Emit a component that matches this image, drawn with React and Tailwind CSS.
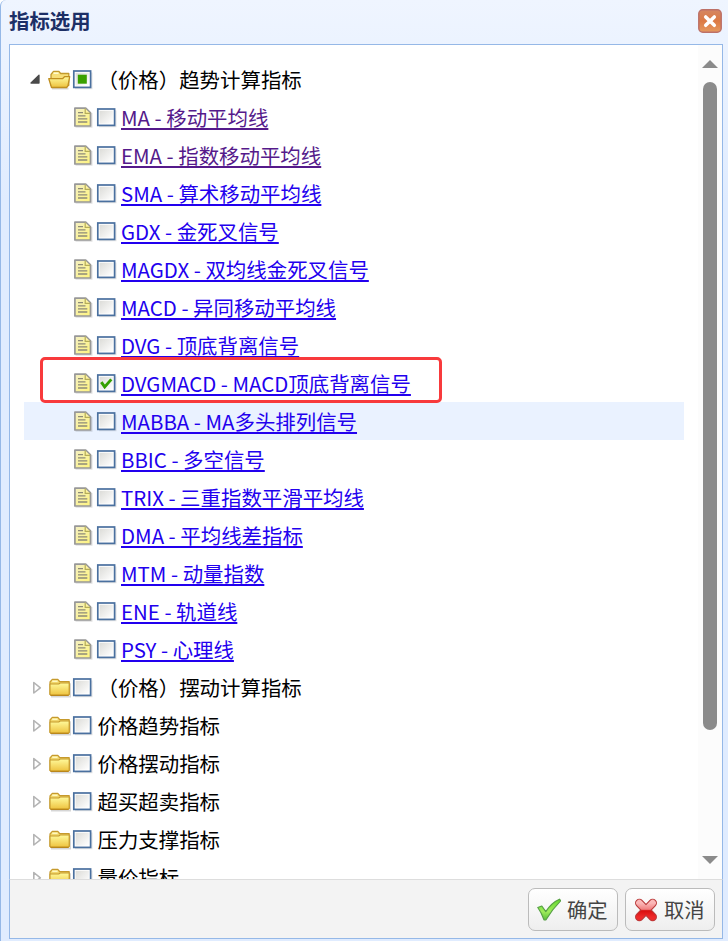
import React, { useState } from "react";
import clsx from "clsx";

const INDICATORS = [
  { name: "MA - 移动平均线", visited: true },
  { name: "EMA - 指数移动平均线", visited: true },
  { name: "SMA - 算术移动平均线" },
  { name: "GDX - 金死叉信号" },
  { name: "MAGDX - 双均线金死叉信号" },
  { name: "MACD - 异同移动平均线" },
  { name: "DVG - 顶底背离信号" },
  { name: "DVGMACD - MACD顶底背离信号", checked: true, marked: true },
  { name: "MABBA - MA多头排列信号", active: true },
  { name: "BBIC - 多空信号" },
  { name: "TRIX - 三重指数平滑平均线" },
  { name: "DMA - 平均线差指标" },
  { name: "MTM - 动量指数" },
  { name: "ENE - 轨道线" },
  { name: "PSY - 心理线" },
];

const GROUPS = [
  "（价格）摆动计算指标",
  "价格趋势指标",
  "价格摆动指标",
  "超买超卖指标",
  "压力支撑指标",
  "量价指标",
];

const Gradients = () => (
  <svg className="absolute h-0 w-0">
    <defs>
      <linearGradient id="folder" x1="0" y1="0" x2="0" y2="1">
        <stop offset="0" stopColor="#fffa9c" />
        <stop offset="1" stopColor="#edc13c" />
      </linearGradient>
      <linearGradient id="paper" x1="0" y1="0" x2="1" y2="1">
        <stop offset="0" stopColor="#f4f0c4" />
        <stop offset="1" stopColor="#fff47c" />
      </linearGradient>
      <linearGradient id="box" x1="0" y1="0" x2="1" y2="1">
        <stop offset="0" stopColor="#dcdcd8" />
        <stop offset="1" stopColor="#ffffff" />
      </linearGradient>
      <linearGradient id="tick" x1="0" y1="0" x2="0" y2="1">
        <stop offset="0" stopColor="#62d92c" />
        <stop offset="0.6" stopColor="#a0ec5c" />
        <stop offset="1" stopColor="#5cc03a" />
      </linearGradient>
      <linearGradient id="cross" x1="0" y1="0" x2="0" y2="1">
        <stop offset="0" stopColor="#fbb8b8" />
        <stop offset="0.45" stopColor="#f08080" />
        <stop offset="0.55" stopColor="#d80f0f" />
        <stop offset="1" stopColor="#ee2a2a" />
      </linearGradient>
      <linearGradient id="close" x1="0" y1="0" x2="0" y2="1">
        <stop offset="0" stopColor="#d58763" />
        <stop offset="0.5" stopColor="#dc7a45" />
        <stop offset="1" stopColor="#e59a60" />
      </linearGradient>
    </defs>
  </svg>
);

const Arrow = ({ open }) => (
  <svg className="h-[38px] w-[24px] shrink-0" viewBox="0 0 24 38">
    {open ? (
      <path d="M15 15.300v7.700H7z" fill="#4a4a4a" stroke="#4a4a4a" strokeWidth="1.3" strokeLinejoin="round" />
    ) : (
      <path d="M9.8 14.500v10.500l6.500-5.200z" fill="#fff" stroke="#b4b4b4" strokeWidth="1.6" strokeLinejoin="round" />
    )}
  </svg>
);

const Folder = ({ open }) => (
  <svg className="h-[38px] w-[23px] shrink-0" viewBox="0 -.3 23 38">
    {open ? (
      <>
        <path d="M4 28.3h16.5" stroke="#000" strokeOpacity="0.15" strokeWidth="1.6" />
        <path d="M3 25V14.2L5.500 11h5.200l2 2.200h8.100V25z" fill="#f7df79" stroke="#c39a2e" strokeWidth="1.3" strokeLinejoin="round" />
        <path d="M5.5 13h5" stroke="#fffbd0" strokeWidth="1.5" />
        <path d="M.8 18.400h13.700l2-2h5.200l-1.800 9.300-1.300 1.500H3.500z" fill="url(#folder)" stroke="#c08f20" strokeWidth="1.3" strokeLinejoin="round" />
      </>
    ) : (
      <>
        <path d="M3 28.3h19.3V15" fill="none" stroke="#000" strokeOpacity="0.16" strokeWidth="1.6" />
        <path d="M2 26V13.5L4.3 11h5.500l2 2.300h9.400V26z" fill="#f0d66a" stroke="#c69a2d" strokeWidth="1.2" strokeLinejoin="round" />
        <path d="M4.2 13h5.400" stroke="#fff8c0" strokeWidth="1.5" />
        <path d="M2 15.700h8.700l1.500-1h9V26l-1 1.200H3L2 26z" fill="url(#folder)" stroke="#c69a2d" strokeWidth="1.1" strokeLinejoin="round" />
        <path d="M2.500 26.900h18" stroke="#b68217" strokeWidth="1.200" />
      </>
    )}
  </svg>
);

const Page = () => (
  <svg className="h-[38px] w-[23px] shrink-0" viewBox="0 0 23 38">
    <path d="M3.500 29h16.300V15" fill="none" stroke="#000" strokeOpacity="0.12" strokeWidth="1.4" />
    <path d="M2.900 10.100h10.800l4.800 4.800V28H2.900z" fill="url(#paper)" stroke="#989898" strokeWidth="1.700" strokeLinejoin="round" />
    <path d="M13.200 10.500v4.900h5" fill="#fff3a0" stroke="#b5ad58" strokeWidth="1.200" />
    <path d="M6 14.700h5M6 17.800h7.500M6 20.900h9.300M6 24h9.300" stroke="#8d8a78" strokeWidth="1.300" />
  </svg>
);

const Check = ({ state, onClick }) => (
  <svg className="h-[38px] w-[24px] shrink-0" viewBox="0 -.5 24 38" onClick={onClick}>
    <path d="M4 28h16.800V12" fill="none" stroke="#000" strokeOpacity="0.1" strokeWidth="1.5" />
    <rect x="2.800" y="10.500" width="16.800" height="16.400" fill="#fff" stroke="#4a709f" strokeWidth="1.700" />
    <rect x="4.600" y="12.300" width="13.200" height="12.800" fill="url(#box)" />
    {state === "partial" && <rect x="6.800" y="14.200" width="9" height="9" fill="#3aa000" />}
    {state === "checked" && (
      <path d="M6.300 17.600l3.400 4.800 6.600-7.500" fill="none" stroke="#34a000" strokeWidth="2.900" />
    )}
  </svg>
);

const Leaf = ({ item, checked, onToggle }) => (
  <li className={clsx("relative flex h-[38px] items-center pl-[48px]", item.active && "bg-[#eaf2ff]")}>
    <Page />
    <Check state={checked ? "checked" : "empty"} onClick={onToggle} />
    <a
      href="#"
      className={clsx(
        "ml-[2px] whitespace-nowrap underline",
        item.visited ? "text-[#551a8b]" : "text-[#2200ee]"
      )}
    >
      {item.name}
    </a>
    {item.marked && (
      <span className="pointer-events-none absolute -top-[7px] left-[16px] z-10 h-[46px] w-[402px] rounded-[5px] border-3 border-[#f83a3c]" />
    )}
  </li>
);

const Button = ({ label, children }) => (
  <button className="flex h-[43px] w-[90px] items-center rounded-[7px] border border-[#bbb] bg-linear-to-b from-white to-[#eeeeee] pl-[8px] text-[20.3px] text-[#444]">
    {children}
    <span className="ml-[6px]">{label}</span>
  </button>
);

const App = () => {
  const [checked, setChecked] = useState(
    INDICATORS.filter((i) => i.checked).map((i) => i.name)
  );

  const toggle = (name) =>
    setChecked((prev) =>
      prev.includes(name) ? prev.filter((n) => n !== name) : [...prev, name]
    );

  return (
    <div className="flex h-[941px] w-[728px] flex-col overflow-hidden rounded-tl-[6px] border-l border-[#95b8e7] bg-linear-to-b from-[#eff5ff] to-[#e0ecff] to-[200px] pr-[5px] pl-[8px] font-['Noto_Sans_CJK_SC',sans-serif] text-[20.43px] text-black">
      <Gradients />
      <header className="flex h-[44px] shrink-0 items-center justify-between">
        <h1 className="pb-[3px] leading-[41px] font-bold text-[#1c2f66]">指标选用</h1>
        <button className="mt-[-3px] mr-px">
          <svg className="h-[24px] w-[24px]" viewBox="0 0 24 24">
            <rect x=".8" y=".8" width="22.4" height="22.4" rx="4" fill="url(#close)" stroke="#bd7168" strokeWidth="1.5" />
            <path d="M7.700 7.900l8.600 8.400M16.300 7.900l-8.600 8.400" stroke="#fff" strokeWidth="3.500" strokeLinecap="round" />
          </svg>
        </button>
      </header>

      <main className="flex h-[835px] shrink-0 overflow-hidden border border-b-0 border-[#95b8e7] bg-white">
        <ul className="w-[674px] pt-[15px] pl-[14px] leading-[38px]">
          <li className="flex h-[38px] items-center">
            <Arrow open />
            <Folder open />
            <Check state="partial" />
            <span className="ml-[2.5px]">（价格）趋势计算指标</span>
          </li>
          {INDICATORS.map((item) => (
            <Leaf
              key={item.name}
              item={item}
              checked={checked.includes(item.name)}
              onToggle={() => toggle(item.name)}
            />
          ))}
          {GROUPS.map((name) => (
            <li key={name} className="flex h-[38px] items-center">
              <Arrow />
              <Folder />
              <Check state="empty" />
              <span className="ml-[2.5px]">{name}</span>
            </li>
          ))}
        </ul>
        {/* scrollbar */}
        <div className="ml-auto flex w-[24px] flex-col items-center bg-[#fcfcfc] pt-[15px] pb-[15px]">
          <svg className="h-[8px] w-[16px] shrink-0" viewBox="0 0 16 8">
            <path d="M8 0l8 8H0z" fill="#8b8b8b" />
          </svg>
          <div className="mt-[14px] h-[648px] w-[14px] rounded-full bg-[#8b8b8b]" />
          <svg className="mt-auto h-[8px] w-[16px] shrink-0" viewBox="0 0 16 8">
            <path d="M0 0h16L8 8z" fill="#8b8b8b" />
          </svg>
        </div>
      </main>

      <footer className="flex h-[60px] shrink-0 justify-end gap-[7px] border border-[#95b8e7] border-t-[#dddddd] bg-[#f3f3f3] pt-[8px] pr-[7px]">
        <Button label="确定">
          <svg className="h-[24px] w-[24px]" viewBox="0 0 24 24">
            <path d="M.8 9.500l4-1.500 4 5.600C12 8.500 17 3.500 22.500 1.200l1.200 1.600C18 8.500 13 15 9 21.800H7C5.300 17 3.500 13.300.8 9.500z" fill="url(#tick)" stroke="#56a044" strokeWidth="1.2" strokeLinejoin="round" />
          </svg>
        </Button>
        <Button label="取消">
          <svg className="h-[24px] w-[24px]" viewBox="0 0 24 24">
            <path d="M5.300 5l13.400 14M18.700 5L5.300 19" fill="none" stroke="#b93a3a" strokeWidth="8.600" strokeLinecap="round" />
            <path d="M5.300 5l13.400 14M18.700 5L5.300 19" fill="none" stroke="url(#cross)" strokeWidth="6.400" strokeLinecap="round" />
          </svg>
        </Button>
      </footer>
    </div>
  );
};

export default App;
